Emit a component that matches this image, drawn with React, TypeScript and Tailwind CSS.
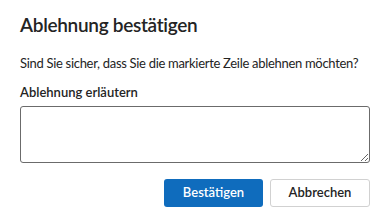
export default function App() {
  return (
    <div
      className="h-[224px] w-[390px] bg-white px-5 pt-[11px] text-[#242424]"
      style={{ fontFamily: "Lato, sans-serif" }}
    >
      <h1 className="text-[19px] font-semibold leading-[28px] tracking-[-0.3px]">Ablehnung bestätigen</h1>
      <p className="mt-[14px] whitespace-nowrap text-[13px] leading-[20px] tracking-[-0.3px]">
        Sind Sie sicher, dass Sie die markierte Zeile ablehnen möchten?
      </p>
      <label className="mt-[9px] block text-[13px] font-semibold leading-[20px]">Ablehnung erläutern</label>
      <textarea className="mt-[4px] block h-[57px] w-full resize-y rounded-[3px] border border-[#6b6b6b] px-2 py-1 text-[13px] outline-none" />
      <div className="mt-[16px] flex justify-end gap-[7px]">
        <button className="h-[28px] w-[99px] rounded-[3px] bg-[#0f6cbd] text-[13px] font-semibold text-white">
          Bestätigen
        </button>
        <button className="h-[28px] w-[100px] rounded-[3px] border border-[#d1d1d1] bg-white text-[13px] font-semibold text-[#242424]">
          Abbrechen
        </button>
      </div>
    </div>
  );
}
